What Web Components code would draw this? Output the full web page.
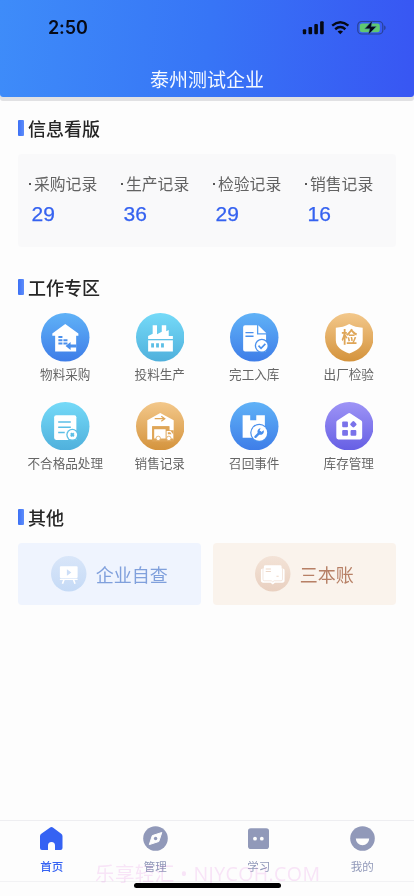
<!DOCTYPE html>
<html lang="zh-CN">
<head>
<meta charset="utf-8">
<meta name="viewport" content="width=device-width,initial-scale=1">
<title>泰州测试企业</title>
<style>
html,body{margin:0;height:896px;overflow:hidden;background:#fdfdfd}
body{font-family:"Noto Sans CJK SC",sans-serif}
</style>
</head>
<body>
<app-screen></app-screen>
<script>
const define=(name,render)=>customElements.define(name,class extends HTMLElement{
  connectedCallback(){
    if(this.shadowRoot)return;
    const t=document.createElement('template');
    t.innerHTML=render(this);
    this.attachShadow({mode:'open'}).append(t.content.cloneNode(true));
  }
});

/* White glyphs on a 48x48 disc; "currentColor" is the disc tone used for cut-outs. */
const glyphs={
purchase:`<path d="M24 11 37 20.200v2.300h-2.200V38H14V22.500h-2.800v-2.300z"/><g fill="currentColor"><path d="M17.200 22.800h4v2h-4zM17.200 26h4v2h-4zM17.200 29.200h4v2h-4zM22.200 26h4v2h-4zM22.200 29.200h4v2h-4z"/><path d="m24.300 32.600 5-4v2.600H35v3h-5.700v2.400z"/></g>`,
factory:`<path d="M16.500 12h4.300v9l4.700-2.500V12h4.400v6l2.500-1.200v6H36.500V26H12v-3.200l4.500-2.200zM12 27h24.500v11H12z"/><path d="M12 26.300h24.500" stroke="currentColor" stroke-width="1"/><path d="M15 30h2.800v4.200H15zM19.900 30h2.800v4.200h-2.800zM24.800 30h2.800v4.200h-2.800z" fill="currentColor"/>`,
done:`<path d="M15 12h11.700v9.300h9V38H15a2 2 0 0 1-2-2V14a2 2 0 0 1 2-2zM28 12l8 8h-8z"/><path d="M15.300 19.500h8M15.300 23h8" stroke="currentColor" stroke-width="1.300"/><circle cx="31.500" cy="32.500" r="7" fill="currentColor"/><circle cx="31.500" cy="32.500" r="5.700"/><path d="m28.200 32.300 2.500 2.600 4.300-4.400" fill="none" stroke="currentColor" stroke-width="1.600"/>`,
shield:`<path d="M24 11q6 3.500 13.300 3.500V27c0 7-6.300 10.500-13.300 13.200C17 37.500 10.700 34 10.700 27V14.500Q18 14.500 24 11z"/><text x="24" y="30" text-anchor="middle" font-size="16" font-weight="700" fill="currentColor">检</text>`,
reject:`<path d="M15 13h18a2 2 0 0 1 2 2v22.500H15a2 2 0 0 1-2-2V15a2 2 0 0 1 2-2z"/><path d="M17 19.700h12.500M17 25h12.500M17 30.300h6.500" stroke="currentColor" stroke-width="1.500"/><circle cx="31" cy="32.500" r="6" fill="currentColor"/><circle cx="31" cy="32.500" r="4.700"/><path d="m29.500 31 3 3m0-3-3 3" stroke="currentColor" stroke-width="2"/>`,
sales:`<path d="M24 11 37.300 18v19H33V24H16v13h-4.800V18z"/><path d="M18.500 16.500H28m-3-2.500 3.500 2.500-3.500 2.500" fill="none" stroke="currentColor" stroke-width="1.200"/><path d="M16 24h17v4h4.300v11H16z" fill="currentColor"/><path d="M18 27h11.300v9H18zM30.300 28.700h4l2.500 3.300v4h-6.500z"/><path d="M31.500 30h2.300l1.400 2h-3.700z" fill="currentColor"/><g stroke="currentColor" stroke-width=".8"><circle cx="22" cy="36" r="2.200"/><circle cx="32.500" cy="36" r="2.200"/></g>`,
recall:`<path d="M12.500 13H20v5h6v-5h8.500v22.500h-22z"/><circle cx="29" cy="30.500" r="9" fill="currentColor"/><circle cx="29" cy="30.500" r="7.800"/><path d="m25.200 34.500 4.600-4.700" stroke="currentColor" stroke-width="2.300" stroke-linecap="round"/><path d="M33.300 28a3.200 3.200 0 1 1-3-2l-1 2.300 1.700 1.400z" fill="currentColor"/>`,
stock:`<path d="M22.800 11.400q1.200-.8 2.400 0l10.600 7a2 2 0 0 1 1 1.800V35a2 2 0 0 1-2 2H13.200a2 2 0 0 1-2-2V20.200a2 2 0 0 1 1-1.800z"/><g fill="currentColor"><rect x="17" y="19.300" width="5.700" height="5.600" rx="1"/><rect x="25.500" y="19.500" width="5.200" height="5.200" rx="1.300" transform="rotate(45 28.100 22.100)"/><rect x="17" y="27.800" width="5.700" height="5.500" rx="1"/><rect x="25.300" y="27.800" width="5.700" height="5.500" rx="1"/></g>`,
board:`<rect x="12" y="14" width="24" height="16" rx="1.500"/><path d="M12 30.800h24v1.700H12z"/><path d="m17.500 32-2 5.500M30.500 32l2 5.500" stroke="#fff" stroke-width="2.200"/><path d="m21.500 18 6 4.300-6 4.300z" fill="currentColor"/>`,
book:`<path d="M11 17c-2 0-3 1-3 2.500v14c0 1.500 1 2.500 3 2.500h10l3 2.500 3-2.500h10c2 0 3-1 3-2.500v-14c0-1.500-1-2.500-3-2.500z"/><path d="M10.800 17v14.500q0 2 2 2H22l2 1.500 2-1.500h9.200q2 0 2-2V17" fill="none" stroke="currentColor" stroke-width=".8"/><rect x="12" y="12.500" width="24" height="19.500" rx="2"/><path d="M14.500 17.500h7M14.500 21h7M29 27.500h3" stroke="currentColor" stroke-width="1.400"/>`};
const tones={blue:['#60b2f7','#3e7de8'],cyan:['#75daf8','#4fb0dc'],gold:['#f3c88b','#d4933c'],violet:['#9e94f6','#665fe4'],paleblue:['#d9e6f9','#c5daf6'],palegold:['#f3e3d7','#e9d0c0']};

define('disc-icon',e=>{const [a,b]=tones[e.getAttribute('tone')];return `
<style>:host{display:block;width:48.500px;height:48.500px;color:color-mix(in srgb,${a} 35%,${b})}svg{display:block;width:100%;height:100%}</style>
<svg viewBox="0 0 48 48" fill="#fff"><defs><linearGradient id="g" x2="0" y2="1"><stop stop-color="${a}"/><stop offset="1" stop-color="${b}"/></linearGradient></defs><circle cx="24" cy="24" r="24" fill="url(#g)"/>${glyphs[e.getAttribute('glyph')]}</svg>`});

define('status-bar',()=>`
<style>:host{display:flex;height:56px;align-items:center;justify-content:space-between;padding:0 28px 0 48px;box-sizing:border-box;color:#070b18}
b{font:600 18px/20px Inter,sans-serif;letter-spacing:-.1px}svg{display:block}</style>
<b>2:50</b>
<svg width="84" height="16" viewBox="0 0 84 16"><g transform="translate(.8)"><g fill="#050915"><rect y="9.200" width="3.400" height="5" rx="1"/><rect x="5.700" y="7" width="3.600" height="7.200" rx="1"/><rect x="11.500" y="4" width="3.600" height="10.200" rx="1"/><rect x="17.300" y="1.300" width="3.600" height="12.900" rx="1"/>
<path d="m37.500 14.200-2.700-2.700q2.700-2 5.400 0z"/></g><g fill="none" stroke="#050915" stroke-width="2.400"><path d="M29.400 5.600q8.100-6.800 16.200 0M32.400 9.200q5.100-4.200 10.200 0"/></g>
<rect x="55" y="1.500" width="25" height="12.500" rx="3.800" fill="none" stroke="#284196" stroke-width="1.200"/><rect x="57" y="3.400" width="20" height="8.800" rx="2.300" fill="#60c870"/><path d="M81.300 5.500c2 .5 2 4 0 4.500z" fill="#284196"/><path d="M69.500.8 62 8.800h5l-1.500 6 8-8.200h-5.200z" fill="#050915" stroke="#3f6cab" stroke-width=".5"/></g></svg>`);

define('app-header',()=>`
<style>:host{display:block;height:97px;background:linear-gradient(95deg,#3e8cf9,#3775f6 50%,#3856f3);border-radius:0 0 3px 3px;box-shadow:0 4px 0 #e1e1e3}
h1{margin:0;height:45px;font-size:19px;line-height:45px;font-weight:400;color:#f5f9ff;text-align:center}</style>
<status-bar></status-bar><h1><slot></slot></h1>`);

define('section-title',()=>`
<style>:host{display:flex;align-items:center;gap:4.500px;height:26px;font-size:18px;line-height:24px;font-weight:500;color:#262626}
i{width:5.500px;height:16px;border-radius:1px;background:linear-gradient(90deg,#3c70f5,#5e8dfb);margin-bottom:1px}span{padding-bottom:1px}</style><i></i><span><slot></slot></span>`);

define('record-stat',e=>`
<style>:host{display:block;width:92px;box-sizing:border-box;padding-left:14px}
p{display:flex;align-items:center;margin:0 0 0 -3.500px;gap:3.500px;height:24px;white-space:nowrap;font-size:15.800px;line-height:24px;color:#626262}
p:before{content:"";width:2px;height:2px;background:#555}
b{display:block;font:400 21px/24px "Liberation Sans",sans-serif;color:#3562f0;-webkit-text-stroke:.25px #3562f0;margin:6px 0 0 -.5px}</style>
<p><slot></slot></p><b>${e.getAttribute('value')}</b>`);

define('work-item',e=>`
<style>:host{display:flex;flex-direction:column;align-items:center;gap:2.500px;height:88.500px;font-size:12.600px;line-height:20px;color:#666;white-space:nowrap}</style>
<disc-icon glyph="${e.getAttribute('glyph')}" tone="${e.getAttribute('tone')}"></disc-icon><span><slot></slot></span>`);

define('link-card',e=>`
<style>:host{display:flex;align-items:center;justify-content:center;gap:9px;height:61.500px;border-radius:4px;font-size:18px;line-height:26px;color:#80a0dc;background:#eff4fe}
:host([tone=palegold]){color:#b78066;background:#faf3ec}
disc-icon{width:35.500px;height:35.500px}</style>
<disc-icon glyph="${e.getAttribute('glyph')}" tone="${e.getAttribute('tone')}"></disc-icon><span><slot></slot></span>`);

const tabs={
home:`<path d="M10.800 1.700q1.700-1.300 3.400 0l8 6a3 3 0 0 1 1.300 2.500V22a2 2 0 0 1-2 2H16v-4.500a3.500 3.500 0 0 0-7 0V24H3a2 2 0 0 1-2-2V10.200a3 3 0 0 1 1.300-2.500z"/>`,
compass:`<circle cx="12.500" cy="12.500" r="12.300"/><path d="m18.800 6.500-3 9-9.500 3.100 3-9z" fill="#fdfdfd" stroke="#fdfdfd" stroke-width="1" stroke-linejoin="round"/><circle cx="12.600" cy="12.500" r="1.700"/>`,
study:`<rect x="2" y="2.300" width="21" height="20.700" rx="2.800"/><g fill="#fdfdfd"><circle cx="9" cy="12.700" r="1.900"/><circle cx="15.800" cy="12.700" r="1.900"/></g>`,
me:`<circle cx="12.500" cy="12.500" r="12.300"/><path d="M5.800 12.500h13.400a6.700 6.700 0 0 1-13.400 0z" fill="#fdfdfd"/>`};
define('tab-item',e=>`
<style>:host{flex:1;display:flex;flex-direction:column;align-items:center;gap:6px;padding-top:4.500px;color:#9199b9;font-size:11.500px;line-height:18px}
:host([active]){color:#3562f3;font-weight:500}svg{display:block}</style>
<svg width="25" height="25" viewBox="0 0 25 25" fill="currentColor">${tabs[e.getAttribute('glyph')]}</svg><span><slot></slot></span>`);

define('app-screen',()=>`
<style>
:host{display:flex;flex-direction:column;height:896px;width:414px;position:relative;overflow:hidden}
main{flex:1;padding:18px 18px 0}
.stats{display:flex;height:93px;margin-top:13px;padding-top:18px;box-sizing:border-box;background:#f9f9fa;border-radius:4px}
.work{display:grid;grid-template-columns:repeat(4,1fr);margin-top:13px}
.stats+section-title{margin-top:27px}.work+section-title{margin-top:14.500px}
.cards{display:grid;grid-template-columns:1fr 1fr;gap:12px;margin-top:12.500px}
nav{display:flex;height:60px;border-top:1px solid #eeeef1;border-bottom:1px solid #f2f2f4}
footer{height:14px}
.bar{width:147px;height:5px;border-radius:3px;background:#000;margin:.5px auto 0}
.mark{position:absolute;left:95px;top:860px;font-size:19.500px;line-height:28px;letter-spacing:.42px;color:#fae6f9;white-space:nowrap;mix-blend-mode:multiply;pointer-events:none;font-family:"Open Sans","Noto Sans CJK SC",sans-serif}
</style>
<app-header>泰州测试企业</app-header>
<main>
<section-title>信息看版</section-title>
<div class="stats"><record-stat value="29">采购记录</record-stat><record-stat value="36">生产记录</record-stat><record-stat value="29">检验记录</record-stat><record-stat value="16">销售记录</record-stat></div>
<section-title>工作专区</section-title>
<div class="work">
<work-item glyph="purchase" tone="blue">物料采购</work-item><work-item glyph="factory" tone="cyan">投料生产</work-item><work-item glyph="done" tone="blue">完工入库</work-item><work-item glyph="shield" tone="gold">出厂检验</work-item>
<work-item glyph="reject" tone="cyan">不合格品处理</work-item><work-item glyph="sales" tone="gold">销售记录</work-item><work-item glyph="recall" tone="blue">召回事件</work-item><work-item glyph="stock" tone="violet">库存管理</work-item></div>
<section-title>其他</section-title>
<div class="cards"><link-card glyph="board" tone="paleblue">企业自查</link-card><link-card glyph="book" tone="palegold">三本账</link-card></div>
</main>
<nav><tab-item glyph="home" active>首页</tab-item><tab-item glyph="compass">管理</tab-item><tab-item glyph="study">学习</tab-item><tab-item glyph="me">我的</tab-item></nav>
<footer><div class="bar"></div></footer>
<div class="mark">乐享轻汇 • NJYCOH.COM</div>`);
</script>
</body>
</html>
